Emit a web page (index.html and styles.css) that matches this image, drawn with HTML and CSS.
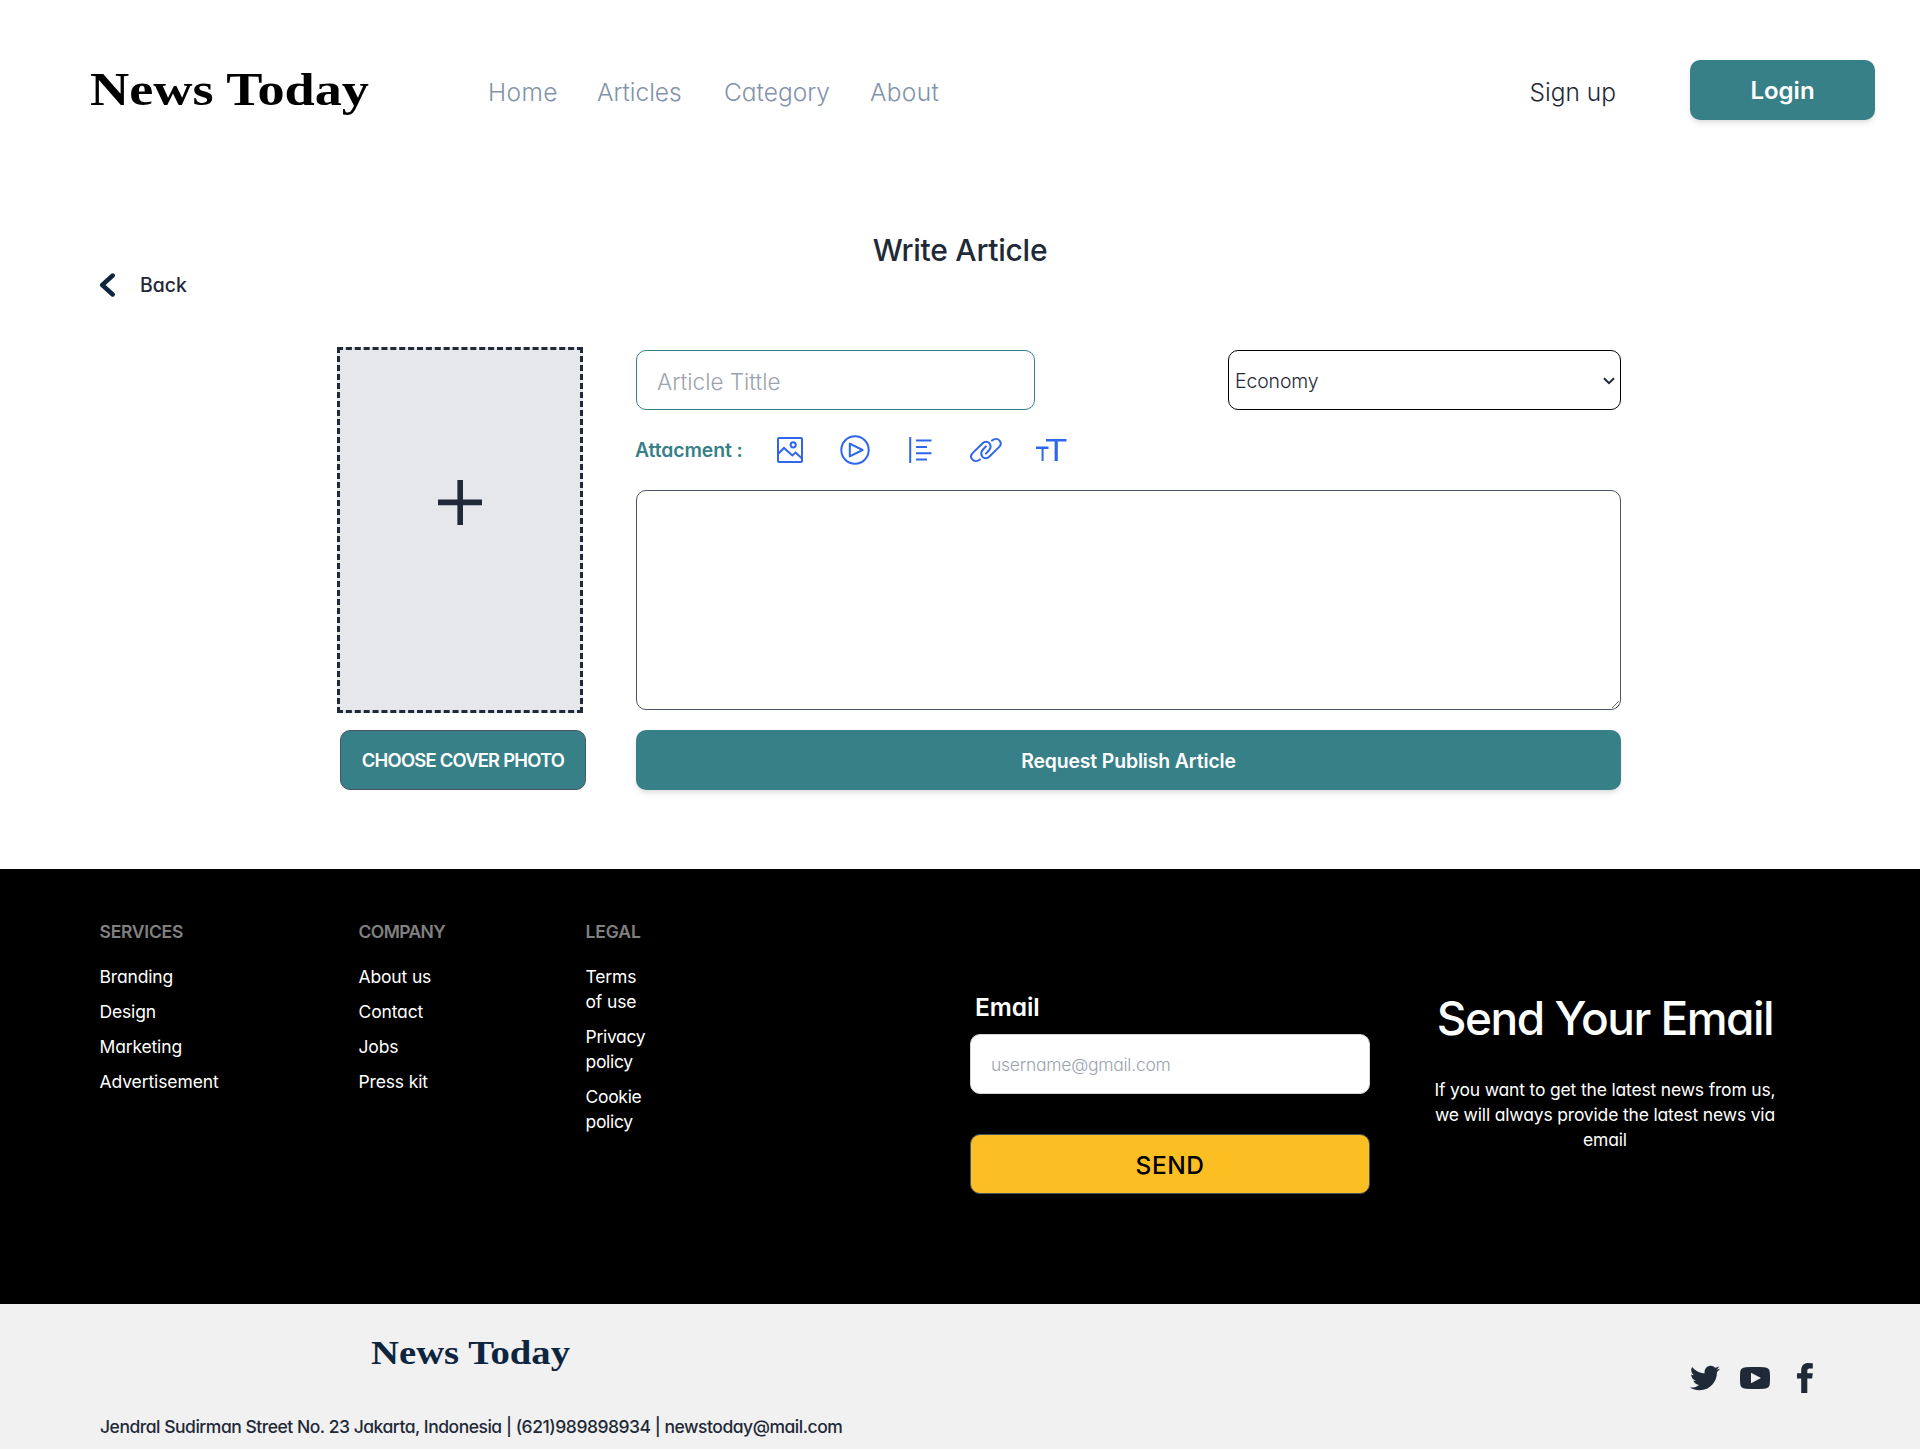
FILE: index.html
```html
<!DOCTYPE html>
<html lang="en">
<head>
<meta charset="utf-8">
<title>News Today - Write Article</title>
<link rel="stylesheet" href="styles.css">
</head>
<body>
<header class="header">
  <svg class="brand" width="290" height="60" viewBox="0 0 290 60"><text x="0" y="45" textLength="279" lengthAdjust="spacingAndGlyphs">News Today</text></svg>
  <nav class="nav">
    <a class="home">Home</a><a class="articles">Articles</a><a class="category">Category</a><a class="about">About</a>
  </nav>
  <a class="signup">Sign up</a>
  <button class="btn login">Login</button>
</header>

<main class="main">
  <h1 class="title">Write Article</h1>
  <a class="back">
    <svg width="16" height="24" viewBox="0 0 16 24"><path d="M13.700 2.500 3.200 12l10.500 9.500" fill="none" stroke="#0d253f" stroke-width="4.400" stroke-linecap="round" stroke-linejoin="round"/></svg>
    <span>Back</span>
  </a>
  <form class="editor">
    <div class="cover-col">
      <div class="cover"><svg width="44" height="45" viewBox="0 0 44 45"><path d="M0 22.4h44M22.2 0v45" stroke="#1f2937" stroke-width="5.6"/></svg></div>
      <button type="button" class="btn choose">CHOOSE COVER PHOTO</button>
    </div>
    <div class="body-col">
      <div class="fields">
        <input class="field article-title" placeholder="Article Tittle">
        <div class="category-box">
          <select class="category-select"><option>Economy</option></select>
          <svg class="arrow" width="12" height="8" viewBox="0 0 12 8"><path d="M1 1.200l5 5 5-5" fill="none" stroke="#1f2937" stroke-width="2"/></svg>
        </div>
      </div>
      <div class="attach">
        <span class="attach-label">Attacment :</span>
        <svg class="i-image" width="26" height="26" viewBox="0 0 26 26"><rect x="1" y="1" width="24" height="24" rx="1"/><circle cx="16.2" cy="7.8" r="2.6"/><path d="M1 17l6-6 8.3 7.5 3.3-3L25 21.5"/></svg>
        <svg class="i-play" width="30" height="30" viewBox="0 0 30 30"><circle cx="15" cy="15" r="13.7"/><path d="M9.8 8.6v12.8L22.6 15z" stroke-linejoin="round"/></svg>
        <svg class="i-lines" width="24" height="26" viewBox="0 0 24 26"><path d="M1.2 0v26M7 3.5h15.5M7 10h11M7 16.2h15.5M7 22.5h11"/></svg>
        <svg class="i-link" width="32" height="24" viewBox="0 0 32 24"><g stroke-linecap="round"><path id="link-half" d="M9.8 21.4C7.2 23.6 4 23.4 2.3 21.4.6 19.4.7 16.9 2.8 14.9L12.6 5.2C14.8 3.2 17.6 3.3 19.3 5.2c1.7 2.1 1.5 5-.5 7.3L15.9 15.600"/><use href="#link-half" transform="rotate(180 15.9 12)"/></g></svg>
        <svg class="i-text" width="31" height="24" viewBox="0 0 31 24"><path d="M10 2.200h20.500M0 9.800h12.500" stroke-width="2.600"/><path d="M20.200 2v21" stroke-width="3.200"/><path d="M6.600 9v14" stroke-width="2"/></svg>
      </div>
      <textarea class="content"></textarea>
      <button type="button" class="btn publish">Request Publish Article</button>
    </div>
  </form>
</main>

<footer class="footer">
  <div class="links">
    <div><h2 class="services">SERVICES</h2><a>Branding</a><a>Design</a><a>Marketing</a><a class="t4">Advertisement</a></div>
    <div><h2 class="company">COMPANY</h2><a>About us</a><a>Contact</a><a>Jobs</a><a>Press kit</a></div>
    <div><h2>LEGAL</h2><a>Terms<br>of use</a><a class="t3">Privacy<br>policy</a><a class="t3">Cookie<br>policy</a></div>
  </div>
  <form class="subscribe">
    <label>Email</label>
    <input class="field mail" placeholder="username@gmail.com">
    <button type="button" class="btn send">SEND</button>
  </form>
  <div class="pitch">
    <h2>Send Your Email</h2>
    <p>If you want to get the latest news from us,<br>we will always provide the latest news via<br>email</p>
  </div>
</footer>

<div class="bottom">
  <div>
    <svg class="brand-small" width="210" height="40" viewBox="0 0 210 40"><text x="0" y="30.500" textLength="199" lengthAdjust="spacingAndGlyphs">News Today</text></svg>
    <p>Jendral Sudirman Street No. 23 Jakarta, Indonesia | (621)989898934 | newstoday@mail.com</p>
  </div>
  <div class="social">
    <svg width="30" height="30" viewBox="0 0 24 24"><path d="M23.954 4.569c-.885.389-1.83.654-2.825.775 1.014-.611 1.794-1.574 2.163-2.723-.951.555-2.005.959-3.127 1.184-.896-.959-2.173-1.559-3.591-1.559-2.717 0-4.92 2.203-4.92 4.917 0 .39.045.765.127 1.124C7.691 8.094 4.066 6.13 1.64 3.161c-.427.722-.666 1.561-.666 2.475 0 1.71.87 3.213 2.188 4.096-.807-.026-1.566-.248-2.228-.616v.061c0 2.385 1.693 4.374 3.946 4.827-.413.111-.849.171-1.296.171-.314 0-.615-.03-.916-.086.631 1.953 2.445 3.377 4.604 3.417-1.68 1.319-3.809 2.105-6.102 2.105-.39 0-.779-.023-1.17-.067 2.189 1.394 4.768 2.209 7.557 2.209 9.054 0 13.999-7.496 13.999-13.986 0-.209 0-.42-.015-.63.961-.689 1.8-1.56 2.46-2.548l-.047-.02z"/></svg>
    <svg width="30" height="30" viewBox="0 0 30 30"><path fill-rule="evenodd" d="M6 4.300C12 3.800 18 3.800 24 4.300 28 4.500 29.600 6.300 29.800 9.500 30.100 13.200 30.100 16.800 29.800 20.500 29.600 23.700 28 25.500 24 25.700 18 26.200 12 26.200 6 25.700 2 25.500.4 23.700.2 20.500-.1 16.800-.1 13.200.2 9.500.4 6.300 2 4.500 6 4.300zM11 9.800v10.400L21 15z"/></svg>
    <svg width="16" height="30" viewBox="0 0 16 30"><path d="M15.800.3v5.200h-3C11 5.500 10.300 6.200 10.300 8v2.200h5.500l-.7 5.200h-4.800V30H4.200V15.400H0v-5.200h4.200V7.200C4.200 2.600 7 0 11.500 0z"/></svg>
  </div>
</div>
</body>
</html>
```
FILE: styles.css
```css
* { box-sizing: border-box; }
body { margin: 0; background: #fff; color: #1f2937; font-family: Inter, "Noto Sans", sans-serif; font-feature-settings: "cv11"; }
h1, h2, p { margin: 0; }
svg { display: block; flex: none; }
button, input, select, textarea { font: inherit; font-feature-settings: inherit; color: inherit; margin: 0; }
.btn { height: 60px; border: 0; border-radius: 10px; background: #388087; color: #fff; font-weight: 600; padding: 0; }

.header { display: flex; align-items: center; height: 180px; padding: 0 45px 0 90px; font-size: 24.5px; line-height: 36px; }
.brand { margin-right: 108px; font: bold 46.500px "Liberation Serif", serif; fill: #000; }
.nav { display: flex; gap: 40px; padding-top: 3px; color: #8393a9; font-weight: 350; }
.home { width: 69px; letter-spacing: .4px; }
.articles { width: 87px; letter-spacing: -.05px; }
.category { width: 106px; letter-spacing: 0; }
.about { letter-spacing: .3px; }
.signup { margin-left: auto; padding-top: 3px; margin-right: 74px; font-weight: 350; letter-spacing: 0; }
.login, .publish { box-shadow: 0 4px 6px -1px rgba(0,0,0,.1), 0 2px 4px -1px rgba(0,0,0,.06); }
.login { width: 185px; padding-top: 2px; font-size: 24px; letter-spacing: 0; }

.main { height: 689px; padding-top: 48px; }
.title { text-align: center; font-size: 30px; line-height: 45px; font-weight: 500; letter-spacing: -.25px; }
.back { display: flex; align-items: center; gap: 25px; width: 120px; margin-left: 99px; height: 24px; font-size: 19.4px; font-weight: 500; }
.editor { display: flex; gap: 50px; padding: 50px 0 0 337px; }
.cover-col { width: 249px; }
.cover { display: grid; place-items: center; width: 246px; height: 366px; padding-bottom: 55px; border: 3px dashed #1f2937; background: #e5e7eb; }
.choose { width: 246px; margin: 17px 0 0 3px; border: 1px solid #4b5563; font-size: 18.4px; letter-spacing: -.77px; }
.body-col { width: 985px; padding-top: 3px; }
.fields { display: flex; justify-content: space-between; }
.field { width: 399px; height: 60px; padding: 0 20px; border: 1px solid #388087; border-radius: 10px; background: #fff; }
.field::placeholder { color: #9ca3af; }
.article-title { font-size: 22.5px; font-weight: 350; padding-top: 2px; }
.category-box { position: relative; }
.category-select { display: block; appearance: none; width: 393px; height: 60px; padding: 2px 6px 0; border: 1px solid #000; border-radius: 10px; background: #fff; font-size: 19.4px; font-weight: 350; letter-spacing: -.1px; }
.arrow { position: absolute; right: 6px; top: 27px; }
.attach { display: flex; align-items: center; height: 80px; }
.attach svg { fill: none; stroke: #2f66ee; stroke-width: 2; }
.attach-label { width: 141px; margin-left: -1px; margin-right: 1px; color: #388087; font-size: 19.4px; font-weight: 600; letter-spacing: -.1px; }
.attach .i-play { margin-left: 37px; }
.attach .i-lines { margin-left: 39px; }
.attach .i-link { margin-left: 37px; }
.attach .i-text { margin-left: 34px; }
.content { display: block; width: 985px; height: 220px; border: 1px solid #4b5563; border-radius: 10px; background: #fff; }
.publish { width: 985px; margin-top: 20px; padding-top: 2px; font-size: 19.4px; letter-spacing: -.13px; }

.footer { display: flex; height: 435px; background: #000; color: #fff; font-size: 17.5px; line-height: 25px; }
.links { display: grid; grid-template-columns: 259px 227px 60px; align-content: start; width: 870px; padding: 50px 0 0 99.5px; letter-spacing: -.15px; }
.links a { display: block; margin-bottom: 10px; }
.links h2 { margin-bottom: 20px; color: #808080; font-size: 17.5px; line-height: 25px; font-weight: 600; letter-spacing: -.1px; }
.links .services { letter-spacing: -.25px; }
.links .company { letter-spacing: -.6px; }
.links .t3 { letter-spacing: -.3px; }
.links .t4 { letter-spacing: -.1px; }
.subscribe { width: 400px; margin-left: 100px; padding-top: 120px; }
.subscribe label { display: block; padding-left: 5px; height: 45px; font-size: 24.5px; line-height: 36px; font-weight: 600; letter-spacing: -.1px; }
.mail { display: block; width: 400px; border-color: #d1d5db; font-size: 17.5px; font-weight: 350; letter-spacing: -.25px; color: #1f2937; }
.send { display: block; width: 400px; margin-top: 40px; padding-top: 2px; border: 1px solid #4b5563; background: #fbbf24; color: #000; font-size: 24.5px; font-weight: 500; letter-spacing: .5px; }
.pitch { width: 350px; margin-left: 60px; padding-top: 119px; text-align: center; }
.pitch h2 { height: 89px; white-space: nowrap; font-size: 46px; line-height: 60px; font-weight: 550; letter-spacing: -1.500px; }
.pitch p { white-space: nowrap; letter-spacing: -.17px; }

.bottom { display: flex; justify-content: space-between; height: 145px; padding: 0 107px 0 100px; background: #f1f1f1; }
.brand-small { margin: 29px 0 0 271px; font: bold 33px "Liberation Serif", serif; fill: #0d253f; }
.bottom p { margin-top: 41px; font-size: 17.5px; line-height: 26px; font-weight: 500; letter-spacing: -.48px; }
.social { display: flex; align-items: flex-start; gap: 20px; padding-top: 59px; fill: #1f2937; }
.social svg:last-child { margin-left: 7px; }
```
